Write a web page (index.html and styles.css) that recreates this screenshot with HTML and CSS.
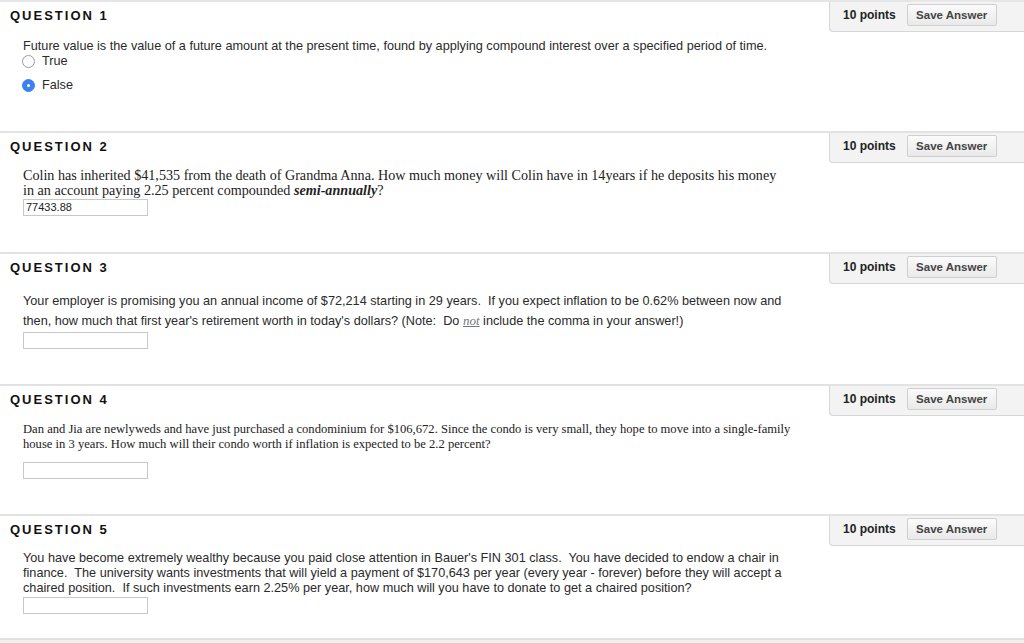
FILE: index.html
```html
<!DOCTYPE html>
<html lang="en">

<head>
    <meta charset="UTF-8">
    <meta name="viewport" content="width=device-width, initial-scale=1.0">
    <title>Take Test</title>
    <link rel="stylesheet" href="styles.css">
</head>

<body>
    <div class="question q1">
        <div class="qMain">
            <h3 class="qTitle">Question 1</h3>
            <div class="qBody sans">
                <p class="qText">Future value is the value of a future amount at the present time, found by applying compound interest over a specified period of time.</p>
                <label class="choice"><span class="radio"></span>True</label>
                <label class="choice"><span class="radio checked"></span>False</label>
            </div>
        </div>
        <div class="pointsBar">
            <span class="points">10 points</span>
            <button class="saveBtn">Save Answer</button>
        </div>
    </div>

    <div class="question q2">
        <div class="qMain">
            <h3 class="qTitle">Question 2</h3>
            <div class="qBody serif">
                <p class="qText">Colin has inherited $41,535 from the death of Grandma Anna. How much money will Colin have in 14years if he deposits his money in an account paying 2.25 percent compounded <b><i>semi-annually</i></b>?</p>
                <div class="answer">77433.88</div>
            </div>
        </div>
        <div class="pointsBar">
            <span class="points">10 points</span>
            <button class="saveBtn">Save Answer</button>
        </div>
    </div>

    <div class="question q3">
        <div class="qMain">
            <h3 class="qTitle">Question 3</h3>
            <div class="qBody sans">
                <p class="qText">Your employer is promising you an annual income of $72,214 starting in 29 years.&nbsp; If you expect inflation to be 0.62% between now and then, how much that first year's retirement worth in today's dollars? (Note:&nbsp; Do <u class="not">not</u> include the comma in your answer!)</p>
                <div class="answer"></div>
            </div>
        </div>
        <div class="pointsBar">
            <span class="points">10 points</span>
            <button class="saveBtn">Save Answer</button>
        </div>
    </div>

    <div class="question q4">
        <div class="qMain">
            <h3 class="qTitle">Question 4</h3>
            <div class="qBody serif small">
                <p class="qText">Dan and Jia are newlyweds and have just purchased a condominium for $106,672. Since the condo is very small, they hope to move into a single-family house in 3 years. How much will their condo worth if inflation is expected to be 2.2 percent?</p>
                <div class="answer"></div>
            </div>
        </div>
        <div class="pointsBar">
            <span class="points">10 points</span>
            <button class="saveBtn">Save Answer</button>
        </div>
    </div>

    <div class="question q5">
        <div class="qMain">
            <h3 class="qTitle">Question 5</h3>
            <div class="qBody sans">
                <p class="qText">You have become extremely wealthy because you paid close attention in Bauer's FIN 301 class.&nbsp; You have decided to endow a chair in finance.&nbsp; The university wants investments that will yield a payment of $170,643 per year (every year - forever) before they will accept a chaired position.&nbsp; If such investments earn 2.25% per year, how much will you have to donate to get a chaired position?</p>
                <div class="answer"></div>
            </div>
        </div>
        <div class="pointsBar">
            <span class="points">10 points</span>
            <button class="saveBtn">Save Answer</button>
        </div>
    </div>

    <div class="pageEnd"></div>
</body>

</html>
```

FILE: styles.css
```css
body {
    margin: 0;
    background: #fff;
    font-family: "Liberation Sans", Arial, sans-serif;
    color: #222;
}

.question {
    display: flex;
    border-top: 2px solid #e2e2e2;
    box-sizing: border-box;
}

.q1 { height: 131px; border-top-color: #e6e6e6; }
.q2 { height: 121px; }
.q3 { height: 132px; }
.q4 { height: 130px; }
.q5 { height: 124px; }

.qMain {
    flex: 1;
    padding-left: 10px;
}

.qTitle {
    margin: 6px 0 0 0;
    font-size: 13px;
    line-height: 15px;
    text-transform: uppercase;
    letter-spacing: 2px;
    font-weight: bold;
    color: #111;
}

.qBody {
    padding-left: 13px;
    color: #222;
}

.qText {
    margin: 0;
    width: 770px;
}

/* sans questions */
.sans {
    font-family: "Liberation Sans", Arial, sans-serif;
    font-size: 12.7px;
    line-height: 15px;
    color: #2a2a2a;
}

.q1 .qBody { padding-top: 16px; }
.q3 .qBody { padding-top: 16px; }
.q5 .qBody { padding-top: 14px; }

.q3 .qText {
    line-height: 20px;
    width: 775px;
}

.not {
    font-family: "Liberation Serif", "Times New Roman", serif;
    font-style: italic;
    color: #777;
    font-size: 13px;
    line-height: 1;
}

/* serif questions */
.serif {
    font-family: "Liberation Serif", "Times New Roman", serif;
    font-size: 14.15px;
    line-height: 15px;
    color: #222;
}

.serif b {
    line-height: 1;
}

.q2 .qBody { padding-top: 14px; }
.q2 .qText { width: 762px; }

.small {
    font-size: 12.6px;
    line-height: 15px;
}

.q4 .qBody { padding-top: 15px; }
.q4 .qText { width: 780px; }

/* radios */
.choice {
    display: flex;
    align-items: center;
    gap: 7px;
    height: 17px;
    margin-top: -1px;
    margin-bottom: 8px;
    margin-left: -1px;
    font-size: 12.7px;
}

.radio {
    width: 11px;
    height: 11px;
    border-radius: 50%;
    border: 1px solid #9a9a9a;
    background: #fff;
    box-sizing: content-box;
    position: relative;
}

.radio.checked {
    border-color: #3d80f0;
    background: #3d80f0;
}

.radio.checked::after {
    content: "";
    position: absolute;
    left: 4px;
    top: 4px;
    width: 3px;
    height: 3px;
    border-radius: 50%;
    background: #fff;
}

/* answer box */
.answer {
    width: 121px;
    height: 15px;
    border: 1px solid #c8c8c8;
    font-family: "Liberation Sans", Arial, sans-serif;
    font-size: 11px;
    line-height: 15px;
    padding-left: 2px;
    color: #222;
    box-sizing: content-box;
}

.q2 .answer { margin-top: 1px; }
.q3 .answer { margin-top: 1px; }
.q4 .answer { margin-top: 10px; }
.q5 .answer { margin-top: 1px; }

/* points and save */
.pointsBar {
    width: 195px;
    height: 30px;
    box-sizing: border-box;
    display: flex;
    align-items: center;
    padding-left: 13px;
    padding-bottom: 3px;
    background: #f3f3f3;
    border-left: 1px solid #d6d6d6;
    border-bottom: 1px solid #d6d6d6;
    border-bottom-left-radius: 4px;
}

.points {
    font-size: 12px;
    font-weight: bold;
    color: #222;
    margin-right: 11px;
}

.saveBtn {
    width: 90px;
    height: 22px;
    padding: 0;
    font-family: "Liberation Sans", Arial, sans-serif;
    font-size: 11.5px;
    font-weight: bold;
    color: #444;
    border: 1px solid #cfcfcf;
    border-radius: 2px;
    background: linear-gradient(to bottom, #fbfbfb, #e9e9e9);
}

.pageEnd {
    height: 5px;
    border-top: 2px solid #e2e2e2;
    background: #f0f0f0;
}
```
